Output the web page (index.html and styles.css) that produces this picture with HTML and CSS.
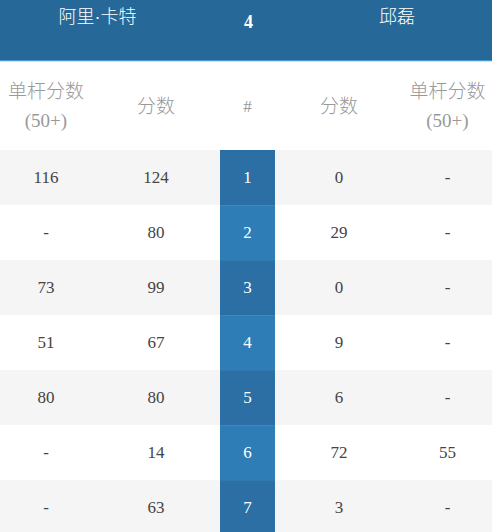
FILE: index.html
```html
<!DOCTYPE html>
<html>
<head>
<meta charset="utf-8">
<link rel="stylesheet" href="styles.css">
</head>
<body>
<div class="board">
  <div class="top">
    <div class="name">阿里·卡特</div>
    <div class="frame">4</div>
    <div class="name">邱磊</div>
  </div>
  <div class="row head">
    <div class="cell">单杆分数<br>(50+)</div>
    <div class="cell">分数</div>
    <div class="cell hash-h">#</div>
    <div class="cell">分数</div>
    <div class="cell">单杆分数<br>(50+)</div>
  </div>
  <div class="row odd">
    <div class="cell">116</div><div class="cell">124</div><div class="cell hash">1</div><div class="cell">0</div><div class="cell">-</div>
  </div>
  <div class="row even">
    <div class="cell">-</div><div class="cell">80</div><div class="cell hash">2</div><div class="cell">29</div><div class="cell">-</div>
  </div>
  <div class="row odd">
    <div class="cell">73</div><div class="cell">99</div><div class="cell hash">3</div><div class="cell">0</div><div class="cell">-</div>
  </div>
  <div class="row even">
    <div class="cell">51</div><div class="cell">67</div><div class="cell hash">4</div><div class="cell">9</div><div class="cell">-</div>
  </div>
  <div class="row odd">
    <div class="cell">80</div><div class="cell">80</div><div class="cell hash">5</div><div class="cell">6</div><div class="cell">-</div>
  </div>
  <div class="row even">
    <div class="cell">-</div><div class="cell">14</div><div class="cell hash">6</div><div class="cell">72</div><div class="cell">55</div>
  </div>
  <div class="row odd">
    <div class="cell">-</div><div class="cell">63</div><div class="cell hash">7</div><div class="cell">3</div><div class="cell">-</div>
  </div>
</div>
</body>
</html>
```
FILE: styles.css
```css
html, body {
  margin: 0;
  padding: 0;
  background: #ffffff;
  overflow: hidden;
}
.board {
  width: 492px;
  font-family: "Liberation Serif", "Noto Sans CJK SC", serif;
}
.top {
  display: grid;
  grid-template-columns: 195px 1fr 190px;
  height: 60px;
  background: #266898;
  border-bottom: 1px solid #4b93d1;
  box-shadow: 0 1px 0 #d3e3f1;
  color: #ffffff;
}
.name {
  text-align: center;
  font-family: "Liberation Sans", "Noto Sans CJK SC", sans-serif;
  font-weight: 300;
  font-size: 18px;
  line-height: 26px;
  padding-top: 4px;
}
.frame {
  text-align: center;
  font-weight: bold;
  font-size: 18px;
  line-height: 20px;
  padding-top: 12px;
}
.row {
  display: grid;
  grid-template-columns: 92px 128px 55px 128px 89px;
  height: 55px;
}
.row.head {
  height: 88px;
  margin-top: 1px;
}
.cell {
  display: flex;
  align-items: center;
  justify-content: center;
  text-align: center;
  font-size: 17px;
  color: #444444;
}
.row.head .cell {
  line-height: 29px;
  color: #999999;
  font-size: 19px;
  font-weight: 300;
}
.row.head .cell.hash-h {
  font-size: 17px;
  font-weight: normal;
}
.odd {
  background: #f5f5f5;
}
.even {
  background: #ffffff;
}
.cell.hash {
  color: #ffffff;
}
.odd .hash {
  background: #2b6fa4;
  border-top: 1px solid #2f78ae;
}
.even .hash {
  background: #2e7db6;
  border-top: 1px solid #3a88c2;
}
.row.odd:nth-child(3) .hash {
  border-top: none;
}
```
